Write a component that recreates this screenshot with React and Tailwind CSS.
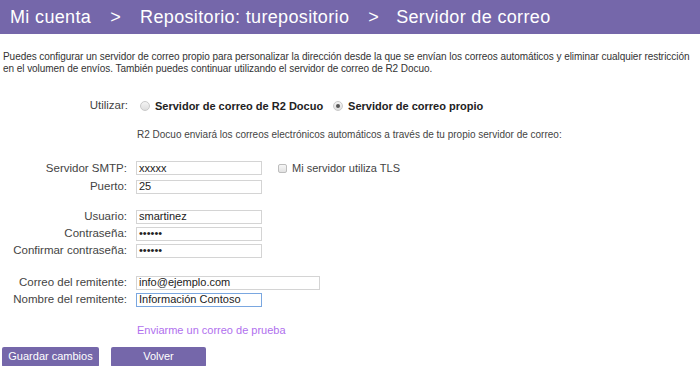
import { useState } from 'react'

const FONT = { fontFamily: '"Liberation Sans", Arial, sans-serif' }

function Radio({ checked }) {
  return (
    <span className="flex h-[10px] w-[10px] items-center justify-center rounded-full border border-[#c9c9c9] bg-gradient-to-b from-[#f4f4f4] to-[#dedede]">
      {checked && <span className="h-[4px] w-[4px] rounded-full bg-[#555]" />}
    </span>
  )
}

function Field({ label, value, wide, focused }) {
  return (
    <div className="flex h-[14px] items-center">
      <label className="w-[128px] shrink-0 pr-[1px] text-right text-[11.5px] text-[#444]">{label}</label>
      <div
        className={`ml-[8px] flex h-[14px] items-center border bg-white pl-[2px] text-[11px] text-[#222] ${
          wide ? 'w-[184px]' : 'w-[126px]'
        } ${focused ? 'border-[#7aa7e0]' : 'border-[#d4d4d4]'}`}
      >
        {value}
      </div>
    </div>
  )
}

export default function App() {
  const [own] = useState(true)

  return (
    <div className="h-[366px] w-[700px] overflow-hidden bg-white" style={FONT}>
      {/* cabecera */}
      <div className="flex h-[34px] items-center bg-[#7567aa] pl-[10px] text-[18px] tracking-[0.35px] text-white">
        <span>Mi cuenta</span>
        <span className="ml-[19px]">&gt;</span>
        <span className="ml-[19px]">Repositorio: turepositorio</span>
        <span className="ml-[19px]">&gt;</span>
        <span className="ml-[17px]">Servidor de correo</span>
      </div>

      <p className="mt-[17px] pl-[3px] pr-[4px] text-[10px] leading-[12px] tracking-[-0.05px] text-[#333]">
        Puedes configurar un servidor de correo propio para personalizar la dirección desde la que se envían los correos
        automáticos y eliminar cualquier restricción en el volumen de envíos. También puedes continuar utilizando el
        servidor de correo de R2 Docuo.
      </p>

      <div className="mt-[24px] flex h-[14px] items-center text-[11px]">
        <span className="w-[128px] text-right text-[11.5px] text-[#444]">Utilizar:</span>
        <span className="ml-[12px] flex items-center gap-[5px]">
          <Radio checked={!own} />
          <b className="text-[#222]">Servidor de correo de R2 Docuo</b>
        </span>
        <span className="ml-[10px] flex items-center gap-[5px]">
          <Radio checked={own} />
          <b className="text-[#222]">Servidor de correo propio</b>
        </span>
      </div>

      <p className="mt-[16px] pl-[137px] text-[10px] leading-[12px] text-[#444]">
        R2 Docuo enviará los correos electrónicos automáticos a través de tu propio servidor de correo:
      </p>

      <div className="mt-[19px] flex flex-col gap-[3px]">
        <div className="flex items-center">
          <Field label="Servidor SMTP:" value="xxxxx" />
          <span className="ml-[16px] flex items-center gap-[5px] text-[11px] text-[#444]">
            <span className="h-[9px] w-[9px] rounded-[2px] border border-[#bdbdbd] bg-gradient-to-b from-[#f6f6f6] to-[#e2e2e2]" />
            Mi servidor utiliza TLS
          </span>
        </div>
        <Field label="Puerto:" value="25" />
      </div>

      <div className="mt-[16px] flex flex-col gap-[3px]">
        <Field label="Usuario:" value="smartinez" />
        <Field label="Contraseña:" value="••••••" />
        <Field label="Confirmar contraseña:" value="••••••" />
      </div>

      <div className="mt-[18px] flex flex-col gap-[3px]">
        <Field label="Correo del remitente:" value="info@ejemplo.com" wide />
        <Field label="Nombre del remitente:" value="Información Contoso" focused />
      </div>

      <a className="mt-[17px] block pl-[137px] text-[11px] leading-[12px] text-[#b070ee]">
        Enviarme un correo de prueba
      </a>

      <div className="mt-[11px] flex gap-[12px] pl-[2px]">
        <button className="h-[20px] w-[97px] rounded-[2px] bg-[#7567aa] text-[11px] text-white">Guardar cambios</button>
        <button className="h-[20px] w-[95px] rounded-[2px] bg-[#7567aa] text-[11px] text-white">Volver</button>
      </div>
    </div>
  )
}
